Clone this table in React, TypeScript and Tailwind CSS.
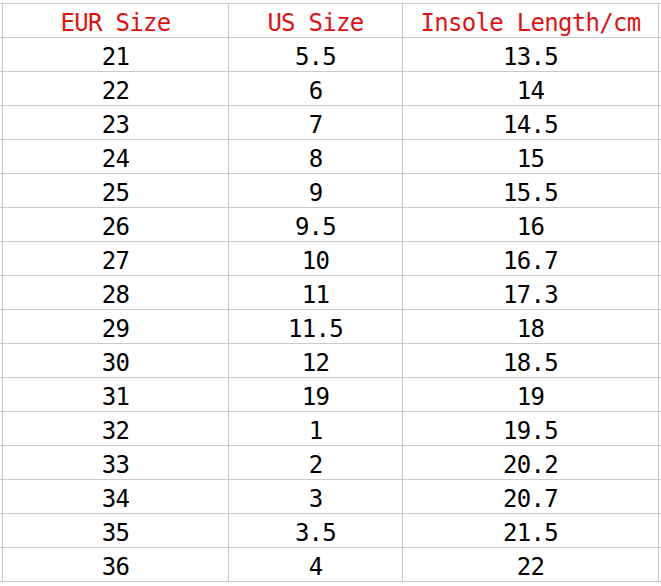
import React from "react";

const rows: [string, string, string][] = [
  ["21", "5.5", "13.5"],
  ["22", "6", "14"],
  ["23", "7", "14.5"],
  ["24", "8", "15"],
  ["25", "9", "15.5"],
  ["26", "9.5", "16"],
  ["27", "10", "16.7"],
  ["28", "11", "17.3"],
  ["29", "11.5", "18"],
  ["30", "12", "18.5"],
  ["31", "19", "19"],
  ["32", "1", "19.5"],
  ["33", "2", "20.2"],
  ["34", "3", "20.7"],
  ["35", "3.5", "21.5"],
  ["36", "4", "22"],
];

function Row({ cells, header }: { cells: [string, string, string]; header?: boolean }) {
  const text = header ? "text-[#dc1414]" : "text-black";
  return (
    <div
      className={`flex border-b border-[#c9c9c9] ${header ? "h-[35px] border-t" : "h-[34px]"}`}
    >
      <div className="w-[3px] shrink-0 border-r border-[#c9c9c9]" />
      <div className={`w-[226px] shrink-0 border-r border-[#c9c9c9] flex items-center justify-center pt-[4px] ${text}`}>
        {cells[0]}
      </div>
      <div className={`w-[174px] shrink-0 border-r border-[#c9c9c9] flex items-center justify-center pt-[4px] ${text}`}>
        {cells[1]}
      </div>
      <div className={`w-[256px] shrink-0 border-r border-[#c9c9c9] flex items-center justify-center pt-[4px] ${text}`}>
        {cells[2]}
      </div>
    </div>
  );
}

export default function App() {
  return (
    <div
      className="w-[661px] h-[586px] bg-white overflow-hidden pt-[3px] text-[24px] leading-none tracking-[-0.7px]"
      style={{ fontFamily: '"DejaVu Sans Mono", monospace' }}
    >
      <Row cells={["EUR Size", "US Size", "Insole Length/cm"]} header />
      {rows.map((r) => (
        <Row key={r[0]} cells={r} />
      ))}
    </div>
  );
}
